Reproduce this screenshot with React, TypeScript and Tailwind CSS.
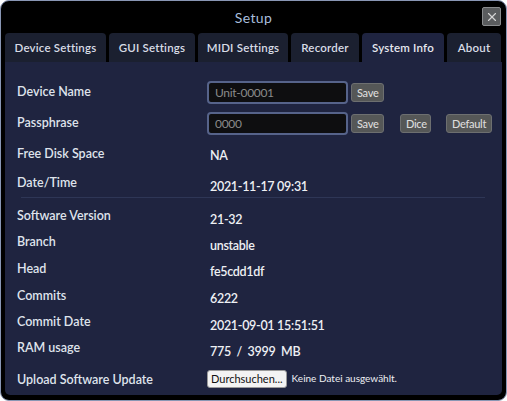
import { X } from "lucide-react";

const tabs = [
  { name: "Device Settings", w: "w-[101px]" },
  { name: "GUI Settings", w: "w-[86px]" },
  { name: "MIDI Settings", w: "w-[90px]" },
  { name: "Recorder", w: "w-[68px]" },
  { name: "System Info", w: "w-[82px]", active: true },
  { name: "About", w: "w-[54px]" },
];

const SmallButton = ({ label, className = "" }: { label: string; className?: string }) => (
  <button
    className={`h-[19px] px-[5px] rounded-[3px] bg-[#555757] border border-[#6d6f70] text-[11px] font-medium leading-none text-[#dcdcdc] ${className}`}
  >
    {label}
  </button>
);

const Row = ({
  label,
  h,
  pad = "pt-[6px]",
  children,
}: {
  label: string;
  h: string;
  pad?: string;
  children?: React.ReactNode;
}) => (
  <div className={`flex items-center ${h}`}>
    <div className="w-[190px] shrink-0 pb-[1px] text-[12.5px] font-semibold text-[#dfe3ec]">{label}</div>
    <div className={`flex items-center ${pad} text-[12.5px] font-semibold tracking-[-0.3px] text-[#eef0f4]`}>{children}</div>
  </div>
);

const inputCls =
  "w-[141px] h-[23px] bg-[#0e0e10] border-2 border-[#56638a] rounded-[4px] px-[6px] text-[12px] font-normal placeholder:text-[#8a8a8a]";

export default function App() {
  return (
    <div
      className="w-[507px] h-[401px] bg-black rounded-[9px] border border-[#8996b4] overflow-hidden flex flex-col"
      style={{ fontFamily: "Lato, 'Noto Sans', sans-serif" }}
    >
      {/* Title bar */}
      <div className="relative h-[32px] shrink-0 flex items-center justify-center">
        <span className="text-[14px] text-[#a8bedc] tracking-wide">Setup</span>
        <button className="absolute right-[5px] top-[6px] w-[19px] h-[19px] rounded-[2px] bg-[#5a5c5e] border border-[#8a8c8e] flex items-center justify-center">
          <X className="w-[14px] h-[14px] text-[#d4d4d4]" strokeWidth={2} />
        </button>
      </div>

      {/* Tabs */}
      <div className="flex gap-[3px] px-[4px] h-[29px] shrink-0">
        {tabs.map((t) => (
          <div
            key={t.name}
            className={`${t.w} flex items-center justify-center rounded-t-[4px] text-[11.5px] font-semibold tracking-[0.2px] ${
              t.active ? "bg-[#1f2440] text-[#e6e8ef]" : "bg-[#1b2030] text-[#d8dce6]"
            }`}
          >
            {t.name}
          </div>
        ))}
      </div>

      {/* Content */}
      <div className="flex-1 mx-[4px] mb-[5px] bg-[#1f2440] rounded-b-[5px] pl-[12px] pr-[13px] pt-[15px]">
        <Row label="Device Name" h="h-[31px]" pad="">
          <input readOnly placeholder="Unit-00001" className={inputCls} />
          <SmallButton label="Save" className="ml-[3px] w-[33px]" />
        </Row>
        <Row label="Passphrase" h="h-[31px]" pad="">
          <input readOnly placeholder="0000" className={inputCls} />
          <SmallButton label="Save" className="ml-[3px] w-[33px]" />
          <SmallButton label="Dice" className="ml-[16px] w-[31px]" />
          <SmallButton label="Default" className="ml-[15px] w-[46px]" />
        </Row>
        <Row label="Free Disk Space" h="h-[32px]" pad="pt-[2px]">
          <span className="pl-[3px]">NA</span>
        </Row>
        <Row label="Date/Time" h="h-[26px]">
          <span className="pl-[3px]">2021-11-17 09:31</span>
        </Row>
        <div className="mx-[4px] h-px bg-[#2e3656] mb-[6px]" />
        <Row label="Software Version" h="h-[26px]">
          <span className="pl-[3px]">21-32</span>
        </Row>
        <Row label="Branch" h="h-[26px]">
          <span className="pl-[3px]">unstable</span>
        </Row>
        <Row label="Head" h="h-[27px]">
          <span className="pl-[3px]">fe5cdd1df</span>
        </Row>
        <Row label="Commits" h="h-[27px]">
          <span className="pl-[3px]">6222</span>
        </Row>
        <Row label="Commit Date" h="h-[26px]">
          <span className="pl-[3px]">2021-09-01 15:51:51</span>
        </Row>
        <Row label="RAM usage" h="h-[26px]">
          <span className="pl-[3px] whitespace-pre">775  /  3999  MB</span>
        </Row>
        <div className="flex items-center h-[33px]">
          <div className="w-[190px] shrink-0 pt-[3px] text-[12.5px] font-semibold text-[#dfe3ec]">Upload Software Update</div>
          <button className="h-[18px] px-[3px] bg-[#f3f3f3] border border-[#9a9a9a] rounded-[3px] text-[11px] leading-none text-[#111]">
            Durchsuchen...
          </button>
          <span className="ml-[5px] text-[10px] text-[#eef0f4]">Keine Datei ausgewählt.</span>
        </div>
      </div>
    </div>
  );
}
